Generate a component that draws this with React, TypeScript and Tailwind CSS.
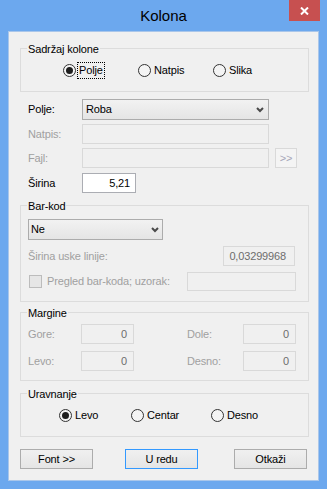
import React from "react";

const Radio = ({ checked }: { checked?: boolean }) => (
  <span className="w-[13px] h-[13px] shrink-0 rounded-full border border-[#333333] bg-[#f4f4f4] flex items-center justify-center">
    {checked && <span className="w-[7px] h-[7px] rounded-full bg-[#1e1e1e]" />}
  </span>
);

const Group = ({
  title,
  className,
  children,
}: {
  title: string;
  className: string;
  children?: React.ReactNode;
}) => (
  <div className={"relative w-[289px] shrink-0 border border-[#dcdcdc] " + className}>
    <span className="absolute left-[6px] top-[-6px] px-[1px] bg-[#f0f0f0] leading-[13px] text-[#000000]">
      {title}
    </span>
    {children}
  </div>
);

const Chevron = () => (
  <svg width="8" height="6" viewBox="0 0 8 6" className="shrink-0">
    <path d="M1 1 L4 4 L7 1" stroke="#4a4a4a" strokeWidth="2" fill="none" />
  </svg>
);

const Combo = ({ text, w, pl, pr }: { text: string; w: string; pl: string; pr: string }) => (
  <div
    className={
      "h-[21px] shrink-0 border border-[#acacac] bg-linear-to-b from-[#f2f2f2] to-[#e5e5e5] flex items-center justify-between " +
      w +
      " " +
      pl +
      " " +
      pr
    }
  >
    <span className="text-[#000000]">{text}</span>
    <Chevron />
  </div>
);

const DisInput = ({ w, h, value, pr }: { w: string; h: string; value?: string; pr?: string }) => (
  <div
    className={
      "shrink-0 border border-[#d9d9d9] bg-[#f0f0f0] flex items-center justify-end text-[#6d6d6d] " +
      w +
      " " +
      h +
      " " +
      (pr || "pr-[6px]")
    }
  >
    {value}
  </div>
);

const Btn = ({ label, primary, className }: { label: string; primary?: boolean; className?: string }) => (
  <div
    className={
      "w-[73px] h-[20px] shrink-0 border bg-linear-to-b from-[#f0f0f0] to-[#e5e5e5] flex items-center justify-center text-[#000000] " +
      (primary ? "border-[#3399ff] " : "border-[#acacac] ") +
      (className || "")
    }
  >
    {label}
  </div>
);

export default function App() {
  return (
    <div className="w-[327px] h-[489px] bg-[#6ca8ee] flex flex-col font-['Liberation_Sans',Arial,sans-serif] text-[11px] leading-[13px] tracking-[-0.15px] text-black">
      <div className="h-[31px] shrink-0 grid grid-cols-[1fr_auto_1fr]">
        <div />
        <div className="self-center text-[15px] leading-[18px] tracking-normal text-[#000000] pt-[1px]">Kolona</div>
        <div className="flex justify-end items-start pr-[7px]">
          <div className="w-[31px] h-[21px] bg-[#c75050] flex items-center justify-center pt-[1px]">
            <svg width="9" height="8" viewBox="0 0 9 8">
              <path d="M1 0.5 L8 7.5 M8 0.5 L1 7.5" stroke="#ffffff" strokeWidth="2" />
            </svg>
          </div>
        </div>
      </div>

      <div className="mx-2 mb-2 flex-1 border border-[#a9c6ea] bg-[#f0f0f0] pl-[11px] flex flex-col">
        {/* Sadržaj kolone */}
        <Group title="Sadržaj kolone" className="mt-[16px] h-[44px] flex items-center pl-[42px] pt-[1px]">
          <div className="w-[75px] flex items-center">
            <Radio checked />
            <span className="ml-[1px] h-[17px] px-[1px] border border-dotted border-[#000000] flex items-center">
              Polje
            </span>
          </div>
          <div className="w-[75px] flex items-center">
            <Radio />
            <span className="ml-[3px]">Natpis</span>
          </div>
          <div className="flex items-center">
            <Radio />
            <span className="ml-[3px]">Slika</span>
          </div>
        </Group>

        {/* Polje */}
        <div className="mt-[7px] h-[21px] flex items-center pl-[8px]">
          <span className="w-[54px] shrink-0">Polje:</span>
          <Combo text="Roba" w="w-[187px]" pl="pl-[3px]" pr="pr-[4px]" />
        </div>
        {/* Natpis */}
        <div className="mt-[4px] h-[20px] flex items-center pl-[8px]">
          <span className="w-[54px] shrink-0 text-[#a0a0a0]">Natpis:</span>
          <DisInput w="w-[187px]" h="h-[20px]" />
        </div>
        {/* Fajl */}
        <div className="mt-[4px] h-[20px] flex items-center pl-[8px]">
          <span className="w-[54px] shrink-0 text-[#a0a0a0]">Fajl:</span>
          <DisInput w="w-[187px]" h="h-[20px]" />
          <div className="ml-[6px] w-[22px] h-[20px] border border-[#d9d9d9] bg-[#f4f4f4] flex items-center justify-center text-[#a6a6b8]">
            &gt;&gt;
          </div>
        </div>
        {/* Širina */}
        <div className="mt-[5px] h-[20px] flex items-center pl-[8px]">
          <span className="w-[54px] shrink-0">Širina</span>
          <div className="w-[54px] h-[20px] border border-[#abadb3] bg-white flex items-center justify-end pr-[5px] text-[#000000]">
            5,21
          </div>
        </div>

        {/* Bar-kod */}
        <Group title="Bar-kod" className="mt-[12px] h-[97px] flex flex-col pl-[7px] pt-[13px]">
          <Combo text="Ne" w="w-[135px]" pl="pl-[2px]" pr="pr-[3px]" />
          <div className="mt-[6px] h-[20px] flex items-center">
            <span className="w-[195px] shrink-0 text-[#a0a0a0]">Širina uske linije:</span>
            <DisInput w="w-[72px]" h="h-[20px]" value="0,03299968" pr="pr-[8px]" />
          </div>
          <div className="mt-[6px] h-[19px] flex items-center">
            <div className="w-[159px] shrink-0 flex items-center pl-[1px]">
              <span className="w-[13px] h-[13px] shrink-0 border border-[#bcbcbc] bg-[#e6e6e6]" />
              <span className="ml-[5px] text-[#a0a0a0]">Pregled bar-koda; uzorak:</span>
            </div>
            <DisInput w="w-[109px]" h="h-[19px]" />
          </div>
        </Group>

        {/* Margine */}
        <Group title="Margine" className="mt-[10px] h-[69px] flex flex-col pl-[7px] pt-[11px]">
          <div className="h-[20px] flex items-center">
            <span className="w-[53px] shrink-0 text-[#a0a0a0]">Gore:</span>
            <DisInput w="w-[53px]" h="h-[20px]" value="0" />
            <span className="w-[53px] shrink-0" />
            <span className="w-[56px] shrink-0 text-[#a0a0a0]">Dole:</span>
            <DisInput w="w-[53px]" h="h-[20px]" value="0" />
          </div>
          <div className="mt-[7px] h-[20px] flex items-center">
            <span className="w-[53px] shrink-0 text-[#a0a0a0]">Levo:</span>
            <DisInput w="w-[53px]" h="h-[20px]" value="0" />
            <span className="w-[53px] shrink-0" />
            <span className="w-[56px] shrink-0 text-[#a0a0a0]">Desno:</span>
            <DisInput w="w-[53px]" h="h-[20px]" value="0" />
          </div>
        </Group>

        {/* Uravnanje */}
        <Group title="Uravnanje" className="mt-[12px] h-[44px] flex items-center pl-[38px]">
          <div className="w-[72px] flex items-center">
            <Radio checked />
            <span className="ml-[3px]">Levo</span>
          </div>
          <div className="w-[80px] flex items-center">
            <Radio />
            <span className="ml-[3px]">Centar</span>
          </div>
          <div className="flex items-center">
            <Radio />
            <span className="ml-[3px]">Desno</span>
          </div>
        </Group>

        {/* Buttons */}
        <div className="mt-[12px] h-[20px] flex">
          <Btn label="Font >>" />
          <Btn label="U redu" primary className="ml-[32px]" />
          <Btn label="Otkaži" className="ml-[36px]" />
        </div>
      </div>
    </div>
  );
}
